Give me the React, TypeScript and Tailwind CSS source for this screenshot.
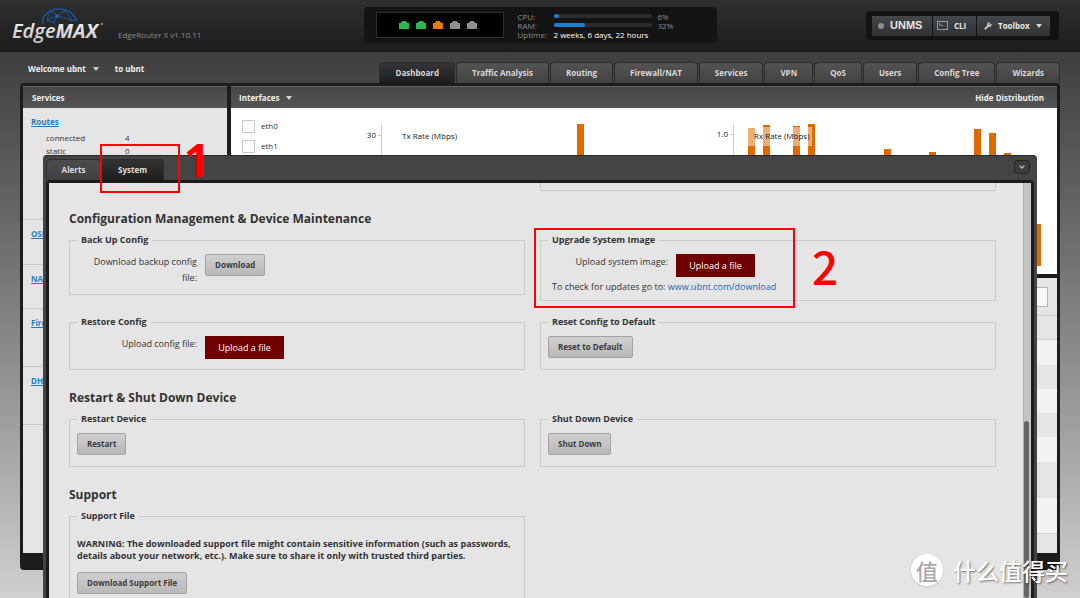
import { ReactNode } from "react";
import clsx from "clsx";
import { ChevronDown, Wrench } from "lucide-react";

const NAV_TABS = [
  "Dashboard",
  "Traffic Analysis",
  "Routing",
  "Firewall/NAT",
  "Services",
  "VPN",
  "QoS",
  "Users",
  "Config Tree",
  "Wizards",
];

const PORTS = ["fill-[#2db84d]", "fill-[#2db84d]", "fill-[#e87a08]", "fill-[#8f8f8f]", "fill-[#8f8f8f]"];

const TABLE_ROWS = [
  "h-[25px] bg-[#f1f3f3]",
  "h-6",
  "h-6 bg-[#f1f3f3]",
  "h-6",
  "h-[25px] bg-[#f1f3f3]",
  "h-9",
  "h-9 bg-[#f1f3f3] border-b border-[#d0d0d0]",
];

// [x, top] of every bar in the Rx chart
const RX_BARS = [
  [40, 20],
  [55, 17],
  [85, 18],
  [100, 16],
  [176, 41],
  [221, 44],
  [266, 21],
  [281, 25],
  [296, 45],
];

function Caret() {
  return (
    <svg className="h-[4px] w-[6px] fill-[#d5d5d5]" viewBox="0 0 6 4">
      <path d="M0 0h6L3 4z" />
    </svg>
  );
}

function Logo() {
  return (
    <svg className="h-[52px] w-[106px]" viewBox="0 0 106 52" role="img" aria-label="EdgeMAX">
      <defs>
        <linearGradient id="chrome" x1="0" y1="0" x2="0" y2="1">
          <stop offset="0" stopColor="#ffffff" />
          <stop offset="1" stopColor="#bdbdbd" />
        </linearGradient>
      </defs>
      <g fill="none" stroke="#17569c" strokeWidth="1">
        <path d="M43 24C41 16 49 9 59 9c9 0 15 5 18 12" strokeWidth="1.6" />
        <path d="M47 20l11-4 17 5M58 16l-7-5M58 16l7-6M58 16l-5 7M47 20l8 3M64 11c4 3 7 7 8 11M50 12c-2 3-3 6-2 10" />
      </g>
      <circle cx="57" cy="16" r="2" fill="#1b63b3" />
      <text
        x="12"
        y="38"
        fontFamily="'Open Sans', sans-serif"
        fontSize="20"
        fontStyle="italic"
        fontWeight="600"
        fill="url(#chrome)"
      >
        Edge<tspan fontWeight="700">MAX</tspan>
      </text>
      <circle cx="102" cy="24" r="1" fill="#aaa" />
    </svg>
  );
}

function Meter({ label, value }: { label: string; value: number }) {
  return (
    <div className="flex items-center">
      <span className="w-9">{label}:</span>
      <div className="h-1 w-[98px] rounded-sm bg-[#2b2b2b]">
        <div className="h-1 rounded-sm bg-[#1c80cc]" style={{ width: `${value}%` }} />
      </div>
      <span className="ml-1.5">{value}%</span>
    </div>
  );
}

function Header() {
  const tool =
    "flex h-5 items-center bg-gradient-to-b from-[#45484b] to-[#2f3234] text-[8px] font-bold text-[#e6e6e6]";
  return (
    <header className="grid h-[52px] grid-cols-[1fr_353px_1fr] bg-gradient-to-b from-[#303030] to-[#1c1c1c]">
      <div className="flex">
        <Logo />
        <span className="ml-3 mt-7 text-[8px] leading-[14px] text-[#8c8c8c]">EdgeRouter X v1.10.11</span>
      </div>

      <div className="mt-[7px] flex h-9 items-center rounded-sm bg-[#141414] pl-3">
        <div className="flex h-[26px] w-32 items-center justify-center gap-[7px] border border-[#2c2c2c] bg-black pr-1">
          {PORTS.map((color, i) => (
            <svg key={i} className={clsx("h-2 w-2.5", color)} viewBox="0 0 10 8">
              <path d="M0 2h2V1h1V0h4v1h1v1h2v6H0z" />
            </svg>
          ))}
        </div>
        <div className="ml-[14px] text-[8px] leading-[9px] text-[#8c8c8c]">
          <Meter label="CPU" value={6} />
          <Meter label="RAM" value={32} />
          <div className="flex">
            <span className="w-9">Uptime:</span>
            <span className="text-white">2 weeks, 6 days, 22 hours</span>
          </div>
        </div>
      </div>

      <div className="mr-[21px] mt-[11px] flex h-[29px] items-center justify-self-end rounded-sm bg-[#121212] pl-1.5 pr-[9px]">
        <div className="flex gap-px">
          <button className={clsx(tool, "w-[60px] pl-1.5")}>
            <span className="h-1.5 w-1.5 rounded-full bg-[#8c8c8c]" />
            <span className="ml-1.5 font-['Liberation_Sans',sans-serif] text-[11px] font-bold">UNMS</span>
          </button>
          <button className={clsx(tool, "w-[43px] gap-1.5 pl-1")}>
            <svg className="h-[9px] w-[11px]" viewBox="0 0 11 9" fill="none" stroke="#999">
              <rect x="0.5" y="0.5" width="10" height="8" />
              <path d="M2 2.5l1.500 1L2 4.500M4 4.500h2" />
            </svg>
            CLI
          </button>
          <button className={clsx(tool, "w-[73px] gap-1.5 pl-[7px]")}>
            <Wrench size={8} className="fill-[#c8c8c8] text-[#c8c8c8]" />
            Toolbox
            <Caret />
          </button>
        </div>
      </div>
    </header>
  );
}

function NavBar() {
  return (
    <nav className="flex h-[31px] items-end justify-between pl-7 pr-5">
      <div className="mb-[7px] flex items-center text-[8px] font-bold leading-[14px] text-[#f0f0f0]">
        <button className="flex items-center gap-[7px]">
          Welcome ubnt <Caret />
        </button>
        <span className="ml-4">to ubnt</span>
      </div>
      <div className="flex gap-px">
        {NAV_TABS.map((tab, i) => (
          <button
            key={tab}
            className={clsx(
              "h-[21px] rounded-t-sm border border-b-0 border-[#2e2e2e] bg-gradient-to-b px-[15px] text-[8px] font-bold text-[#d8d8d8]",
              i === 0 ? "from-[#363636] to-[#1e1e1e]" : "from-[#535353] to-[#434343]"
            )}
          >
            {tab}
          </button>
        ))}
      </div>
    </nav>
  );
}

function PanelTitle({ children }: { children: ReactNode }) {
  return (
    <div className="flex h-[22px] items-center border-t border-[#666] bg-gradient-to-b from-[#464646] to-[#555] text-[8px] font-bold text-[#f0f0f0]">
      {children}
    </div>
  );
}

function ServiceSection({ title, className, children }: { title: string; className: string; children?: ReactNode }) {
  return (
    <section className={clsx("border-b border-[#c8c8c8] pl-2 pt-[7px]", className)}>
      <a href="#" className="block text-[8px] font-bold leading-[14px] text-[#1e80c3] underline">
        {title}
      </a>
      {children}
    </section>
  );
}

function ServicesPanel() {
  return (
    <aside className="flex w-[204px] flex-col bg-[#e5e5e5]">
      <PanelTitle>
        <span className="pl-[9px]">Services</span>
      </PanelTitle>
      <ServiceSection title="Routes" className="h-28">
        <dl className="mt-0.5 grid grid-cols-[79px_1fr] pl-[15px] text-[8px] leading-[13px] text-[#333]">
          <dt>connected</dt>
          <dd>4</dd>
          <dt>static</dt>
          <dd>0</dd>
        </dl>
      </ServiceSection>
      <ServiceSection title="OSPF" className="h-[45px]" />
      <ServiceSection title="NAT" className="h-11" />
      <ServiceSection title="Firewall" className="h-[58px]" />
      <ServiceSection title="DHCP" className="h-[58px]" />
    </aside>
  );
}

function TxChart() {
  return (
    <svg className="h-full min-w-0 flex-1 text-[8px]" fill="#222">
      <path d="M22.500 16v150M19 27.500h3M19 49.500h3" stroke="#ccc" />
      <text x="17" y="30" textAnchor="end">30</text>
      <text x="17" y="52" textAnchor="end">25</text>
      <text x="43" y="31">Tx Rate (Mbps)</text>
      <rect x="218" y="16" width="7" height="150" fill="#e06a00" />
    </svg>
  );
}

function RxChart() {
  return (
    <svg className="h-full min-w-0 flex-1 text-[8px]" fill="#222">
      <path d="M25.500 16v150M22 26.500h3" stroke="#ccc" />
      <text x="20" y="29" textAnchor="end">1.0</text>
      {RX_BARS.map(([x, y]) => (
        <rect key={x} x={x} y={y} width="7" height={158 - y} fill="#e06a00" />
      ))}
      <rect x="326" y="116" width="7" height="42" fill="#e06a00" />
      <rect x="40" y="19" width="64" height="19" fill="#fff" fillOpacity="0.45" />
      <text x="46" y="31">Rx Rate (Mbps)</text>
    </svg>
  );
}

function InterfacesPanel() {
  return (
    <main className="flex min-w-0 flex-1 flex-col bg-[#e5e5e5]">
      <PanelTitle>
        <button className="flex items-center gap-[7px] pl-2">
          Interfaces <Caret />
        </button>
        <button className="ml-auto mr-[13px]">Hide Distribution</button>
      </PanelTitle>
      <div className="flex h-[166px] bg-white">
        <div className="w-32 pl-[11px] pt-2 text-[8px] text-[#333]">
          {["eth0", "eth1"].map((name) => (
            <label key={name} className="flex h-5 items-center gap-1.5">
              <input type="checkbox" className="h-[13px] w-[13px] appearance-none border border-[#c8c8c8] bg-white" />
              {name}
            </label>
          ))}
        </div>
        <TxChart />
        <RxChart />
      </div>
      <div className="h-1 bg-[#1c1c1c]" />
      <div className="flex h-[38px] items-center justify-end border-b border-[#d0d0d0] pr-[9px]">
        <input type="text" aria-label="Search" className="h-5 w-32 border border-[#b5b5b5] bg-[#f7f7f7]" />
      </div>
      <div className="h-6 border-b border-[#d0d0d0]" />
      {TABLE_ROWS.map((row, i) => (
        <div key={i} className={row} />
      ))}
    </main>
  );
}

function Fieldset({ legend, className = "pb-[11px]", children }: { legend: string; className?: string; children: ReactNode }) {
  return (
    <fieldset className={clsx("min-w-0 border border-[#cacaca] px-[7px]", className)}>
      <legend className="px-1 text-[9px] font-bold leading-[14px] text-[#333]">{legend}</legend>
      <div className="pt-[7px]">{children}</div>
    </fieldset>
  );
}

function GreyButton({ id, children }: { id?: string; children: ReactNode }) {
  return (
    <button
      id={id}
      className="block h-[22px] rounded-xs border border-[#a3a3a3] bg-gradient-to-b from-[#d0d0d0] to-[#b8b8b8] px-[9px] text-[8px] font-bold text-[#3c3c3c]"
    >
      {children}
    </button>
  );
}

function FormRow({ id, label, children }: { id: string; label: string; children: ReactNode }) {
  return (
    <div className="flex items-start gap-2">
      <label htmlFor={id} className="w-[120px] text-right text-[9px] leading-4 text-[#333]">
        {label}
      </label>
      {children}
    </div>
  );
}

function UploadButton({ id }: { id: string }) {
  return (
    <button id={id} className="h-[23px] w-[79px] bg-[#700000] text-[9px] text-white">
      Upload a file
    </button>
  );
}

function SectionTitle({ children }: { children: ReactNode }) {
  return <h2 className="mb-[5px] mt-[19px] text-[12px] font-bold leading-[18px] text-[#333]">{children}</h2>;
}

function SystemPanel() {
  const grid = "grid grid-cols-2 items-stretch gap-x-[15px] gap-y-[14px]";
  return (
    <div className="min-w-0 flex-1 pl-5 pr-[27px]">
      <div className={grid}>
        <div className="col-start-2 h-2 border border-t-0 border-[#cacaca]" />
      </div>

      <SectionTitle>Configuration Management &amp; Device Maintenance</SectionTitle>
      <div className={grid}>
        <div>
          <Fieldset legend="Back Up Config" className="pb-2">
            <FormRow id="backup" label="Download backup config file:">
              <GreyButton id="backup">Download</GreyButton>
            </FormRow>
          </Fieldset>
        </div>
        <Fieldset legend="Upgrade System Image" className="pb-[5px]">
          <FormRow id="image" label="Upload system image:">
            <UploadButton id="image" />
          </FormRow>
          <p className="mt-0.5 pl-1 text-[9px] leading-4 text-[#333]">
            To check for updates go to:{" "}
            <a href="#" className="text-[#2563ac]">
              www.ubnt.com/download
            </a>
          </p>
        </Fieldset>
        <Fieldset legend="Restore Config" className="pb-2.5">
          <FormRow id="restore" label="Upload config file:">
            <UploadButton id="restore" />
          </FormRow>
        </Fieldset>
        <Fieldset legend="Reset Config to Default">
          <GreyButton>Reset to Default</GreyButton>
        </Fieldset>
      </div>

      <SectionTitle>Restart &amp; Shut Down Device</SectionTitle>
      <div className={grid}>
        <Fieldset legend="Restart Device">
          <GreyButton>Restart</GreyButton>
        </Fieldset>
        <Fieldset legend="Shut Down Device">
          <GreyButton>Shut Down</GreyButton>
        </Fieldset>
      </div>

      <SectionTitle>Support</SectionTitle>
      <div className={grid}>
        <Fieldset legend="Support File">
          <p className="mb-2.5 mt-2 text-[9px] font-bold leading-3 text-[#333]">
            WARNING: The downloaded support file might contain sensitive information (such as passwords, details about
            your network, etc.). Make sure to share it only with trusted third parties.
          </p>
          <GreyButton>Download Support File</GreyButton>
        </Fieldset>
      </div>
    </div>
  );
}

function SystemWindow() {
  return (
    <div className="absolute inset-x-[43px] bottom-0 top-[155px] flex flex-col overflow-hidden rounded-t-sm border-t border-[#2a2a2a] bg-[#444] px-[3px]">
      <div className="flex h-6 items-end text-[8px] font-bold text-[#dedede]">
        <button className="h-[21px] w-[55px] rounded-t-sm border border-b-0 border-[#303030] bg-gradient-to-b from-[#4c4c4c] to-[#404040]">
          Alerts
        </button>
        <button className="h-[21px] w-[63px] rounded-t-sm border border-b-0 border-[#2c2c2c] bg-gradient-to-b from-[#333] to-[#1e1e1e]">
          System
        </button>
        <button
          aria-label="Collapse"
          className="mb-1.5 ml-auto mr-1 flex h-[14px] w-4 items-center justify-center rounded-sm border border-[#222] bg-[#3c3c3c]"
        >
          <ChevronDown size={8} strokeWidth={4} className="text-[#bbb]" />
        </button>
      </div>
      <div className="flex min-h-0 flex-1 overflow-hidden rounded-t-sm bg-[#1c1c1c] px-[3px] pt-[3px]">
        <div className="flex min-w-0 flex-1 overflow-hidden bg-[#e5e5e5]">
          <SystemPanel />
          <div className="w-2 border-l border-[#b0b0b0] bg-[#c4c4c4] pt-[238px]">
            <div className="h-full w-[5px] rounded-full bg-[#666]" />
          </div>
        </div>
      </div>
    </div>
  );
}

function Annotations() {
  return (
    <>
      <div className="absolute left-[100px] top-[144px] h-[49px] w-20 border-2 border-[#f00]" />
      <span className="absolute left-[184px] top-[136px] text-[46px] font-bold leading-[46px] text-[#f00]">1</span>
      <div className="absolute left-[534px] top-[228px] h-20 w-[261px] border-2 border-[#f00]" />
      <span className="absolute left-[812px] top-[242px] font-['Noto_Sans_CJK_SC',sans-serif] text-[46px] font-medium leading-[46px] text-[#f00]">
        2
      </span>
    </>
  );
}

function Watermark() {
  return (
    <div className="absolute bottom-3 right-3 flex items-center gap-2.5 font-['Noto_Sans_CJK_SC',sans-serif] text-white">
      <span className="flex h-8 w-8 items-center justify-center rounded-full bg-white text-[22px] font-medium leading-8 text-[#aaa] shadow">
        值
      </span>
      <span className="text-[23px] font-medium leading-8 [text-shadow:1px_1px_2px_rgba(0,0,0,0.5)]">什么值得买</span>
    </div>
  );
}

export default function App() {
  return (
    <div className="relative flex h-screen flex-col overflow-hidden bg-gradient-to-b from-[#333] to-[#d0d0d0] font-['Open_Sans',sans-serif]">
      <Header />
      <NavBar />
      <div className="mx-5 mb-7 flex min-h-0 flex-1 gap-1 rounded-sm bg-[#1c1c1c] px-[3px] pb-[17px] pt-[3px]">
        <ServicesPanel />
        <InterfacesPanel />
      </div>
      <SystemWindow />
      <Annotations />
      <Watermark />
    </div>
  );
}
